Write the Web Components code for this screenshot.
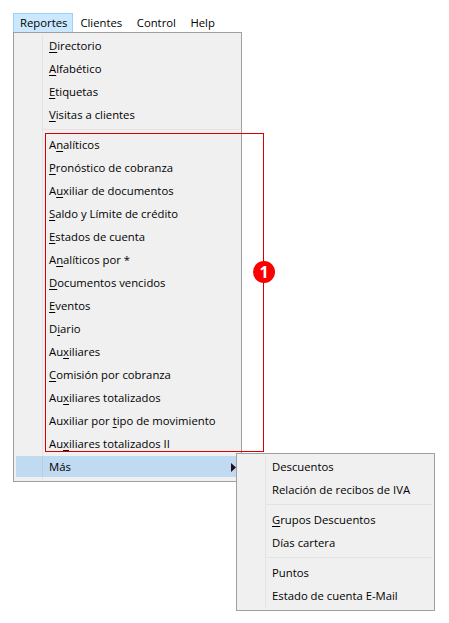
<!DOCTYPE html>
<html>
<head>
<meta charset="utf-8">
<title>Reportes</title>
<style>
    html, body { margin: 0; background: #fff; }
    body {
        padding: 13px 0 0 13px;
        height: 623px;
        box-sizing: border-box;
        overflow: hidden;
        position: relative;
        font: 11.3px "Open Sans", "Noto Sans", sans-serif;
        color: #000;
    }
    u { text-underline-offset: 2px; text-decoration-skip-ink: none; }
</style>
</head>
<body>
<app-menu-bar>
    <bar-entry active>Reportes</bar-entry>
    <bar-entry>Clientes</bar-entry>
    <bar-entry>Control</bar-entry>
    <bar-entry>Help</bar-entry>
</app-menu-bar>

<drop-menu>
    <menu-item><u>D</u>irectorio</menu-item>
    <menu-item><u>A</u>lfabético</menu-item>
    <menu-item><u>E</u>tiquetas</menu-item>
    <menu-item><u>V</u>isitas a clientes</menu-item>
    <menu-sep></menu-sep>
    <menu-item>A<u>n</u>alíticos</menu-item>
    <menu-item><u>P</u>ronóstico de cobranza</menu-item>
    <menu-item>A<u>u</u>xiliar de documentos</menu-item>
    <menu-item><u>S</u>aldo y Límite de crédito</menu-item>
    <menu-item><u>E</u>stados de cuenta</menu-item>
    <menu-item>A<u>n</u>alíticos por *</menu-item>
    <menu-item><u>D</u>ocumentos vencidos</menu-item>
    <menu-item><u>E</u>ventos</menu-item>
    <menu-item>D<u>i</u>ario</menu-item>
    <menu-item>Au<u>x</u>iliares</menu-item>
    <menu-item><u>C</u>omisión por cobranza</menu-item>
    <menu-item>Au<u>x</u>iliares totalizados</menu-item>
    <menu-item>Auxiliar por <u>t</u>ipo de movimiento</menu-item>
    <menu-item>Au<u>x</u>iliares totalizados II</menu-item>
    <menu-item selected arrow>Más</menu-item>
</drop-menu>

<callout-box></callout-box>
<callout-badge>1</callout-badge>

<sub-menu>
    <menu-item>Descuentos</menu-item>
    <menu-item>Relación de recibos de IVA</menu-item>
    <menu-sep></menu-sep>
    <menu-item><u>G</u>rupos Descuentos</menu-item>
    <menu-item>Días cartera</menu-item>
    <menu-sep></menu-sep>
    <menu-item>Puntos</menu-item>
    <menu-item>Estado de cuenta E-Mail</menu-item>
</sub-menu>

<script>
// menu strip on top, only holds the entries
class AppMenuBar extends HTMLElement {
    constructor() {
        super();
        this.attachShadow({mode: "open"});
        this.shadowRoot.innerHTML = `
            <style>
                :host { display: flex; height: 19px; }
            </style>
            <slot></slot>
        `;
    }
}

class BarEntry extends HTMLElement {
    constructor() {
        super();
        this.attachShadow({mode: "open"});
        this.shadowRoot.innerHTML = `
            <style>
                :host {
                    display: flex;
                    align-items: center;
                    box-sizing: border-box;
                    height: 19px;
                    padding: 0 6.5px 2px 6px;
                    border: 1px solid transparent;
                    border-bottom: 0;
                }
                :host([active]) {
                    padding-right: 5px;
                    background: #cce8ff;
                    border: 1px solid #99d1ff;
                    border-bottom: 0;
                }
            </style>
            <slot></slot>
        `;
    }
}

const panelStyle = `
    :host {
        display: block;
        box-sizing: border-box;
        background: #f0f0f0;
        border: 1px solid #a0a0a0;
        padding: 2px;
    }
    .rail {
        position: relative;
    }
    .rail::after {
        content: "";
        position: absolute;
        top: 0;
        bottom: 0;
        left: 26px;
        width: 1px;
        background: rgba(0, 0, 0, 0.05);
    }
    slot { display: block; }
`;

class DropMenu extends HTMLElement {
    constructor() {
        super();
        this.attachShadow({mode: "open"});
        this.shadowRoot.innerHTML = `
            <style>${panelStyle}
                :host { width: 229px; height: 450px; }
            </style>
            <div class="rail"><slot></slot></div>
        `;
    }
}

// sits over the parent menu, next to the selected row
class SubMenu extends HTMLElement {
    constructor() {
        super();
        this.attachShadow({mode: "open"});
        this.shadowRoot.innerHTML = `
            <style>${panelStyle}
                :host { position: absolute; left: 236px; top: 453px; width: 199px; height: 158px; }
            </style>
            <div class="rail"><slot></slot></div>
        `;
    }
}

class MenuItem extends HTMLElement {
    constructor() {
        super();
        this.attachShadow({mode: "open"});
        this.shadowRoot.innerHTML = `
            <style>
                :host {
                    display: flex;
                    align-items: center;
                    position: relative;
                    box-sizing: border-box;
                    height: 23px;
                    padding: 0 0 2px 33px;
                }
                :host([selected]) {
                    background: linear-gradient(#c0daf2, #c0daf2) 0 0 / 100% 21px no-repeat;
                }
                .label { white-space: nowrap; }
                svg { display: none; position: absolute; right: 3px; top: 7px; }
                :host([arrow]) svg { display: block; }
            </style>
            <span class="label"><slot></slot></span>
            <svg width="5" height="9" viewBox="0 0 5 9"><path d="M0 0 L5 4.5 L0 9 Z" fill="#201018"/></svg>
        `;
    }
}

class MenuSep extends HTMLElement {
    constructor() {
        super();
        this.attachShadow({mode: "open"});
        this.shadowRoot.innerHTML = `
            <style>
                :host { display: block; height: 7px; padding: 2px 0 0 27px; box-sizing: border-box; }
                div { height: 1px; background: #e3e3e3; }
            </style>
            <div></div>
        `;
    }
}

class CalloutBox extends HTMLElement {
    constructor() {
        super();
        this.attachShadow({mode: "open"});
        this.shadowRoot.innerHTML = `
            <style>
                :host {
                    position: absolute;
                    left: 45px;
                    top: 133px;
                    width: 219px;
                    height: 319px;
                    box-sizing: border-box;
                    border: 1px solid #d60000;
                }
            </style>
        `;
    }
}

class CalloutBadge extends HTMLElement {
    constructor() {
        super();
        this.attachShadow({mode: "open"});
        this.shadowRoot.innerHTML = `
            <style>
                :host {
                    position: absolute;
                    left: 253px;
                    top: 261px;
                    width: 22px;
                    height: 22px;
                    border-radius: 50%;
                    background: #fa0000;
                    color: #fff;
                    font: bold 16px "Open Sans", sans-serif;
                    display: flex;
                    align-items: center;
                    justify-content: center;
                }
            </style>
            <slot></slot>
        `;
    }
}

customElements.define("app-menu-bar", AppMenuBar);
customElements.define("bar-entry", BarEntry);
customElements.define("drop-menu", DropMenu);
customElements.define("sub-menu", SubMenu);
customElements.define("menu-item", MenuItem);
customElements.define("menu-sep", MenuSep);
customElements.define("callout-box", CalloutBox);
customElements.define("callout-badge", CalloutBadge);
</script>
</body>
</html>
